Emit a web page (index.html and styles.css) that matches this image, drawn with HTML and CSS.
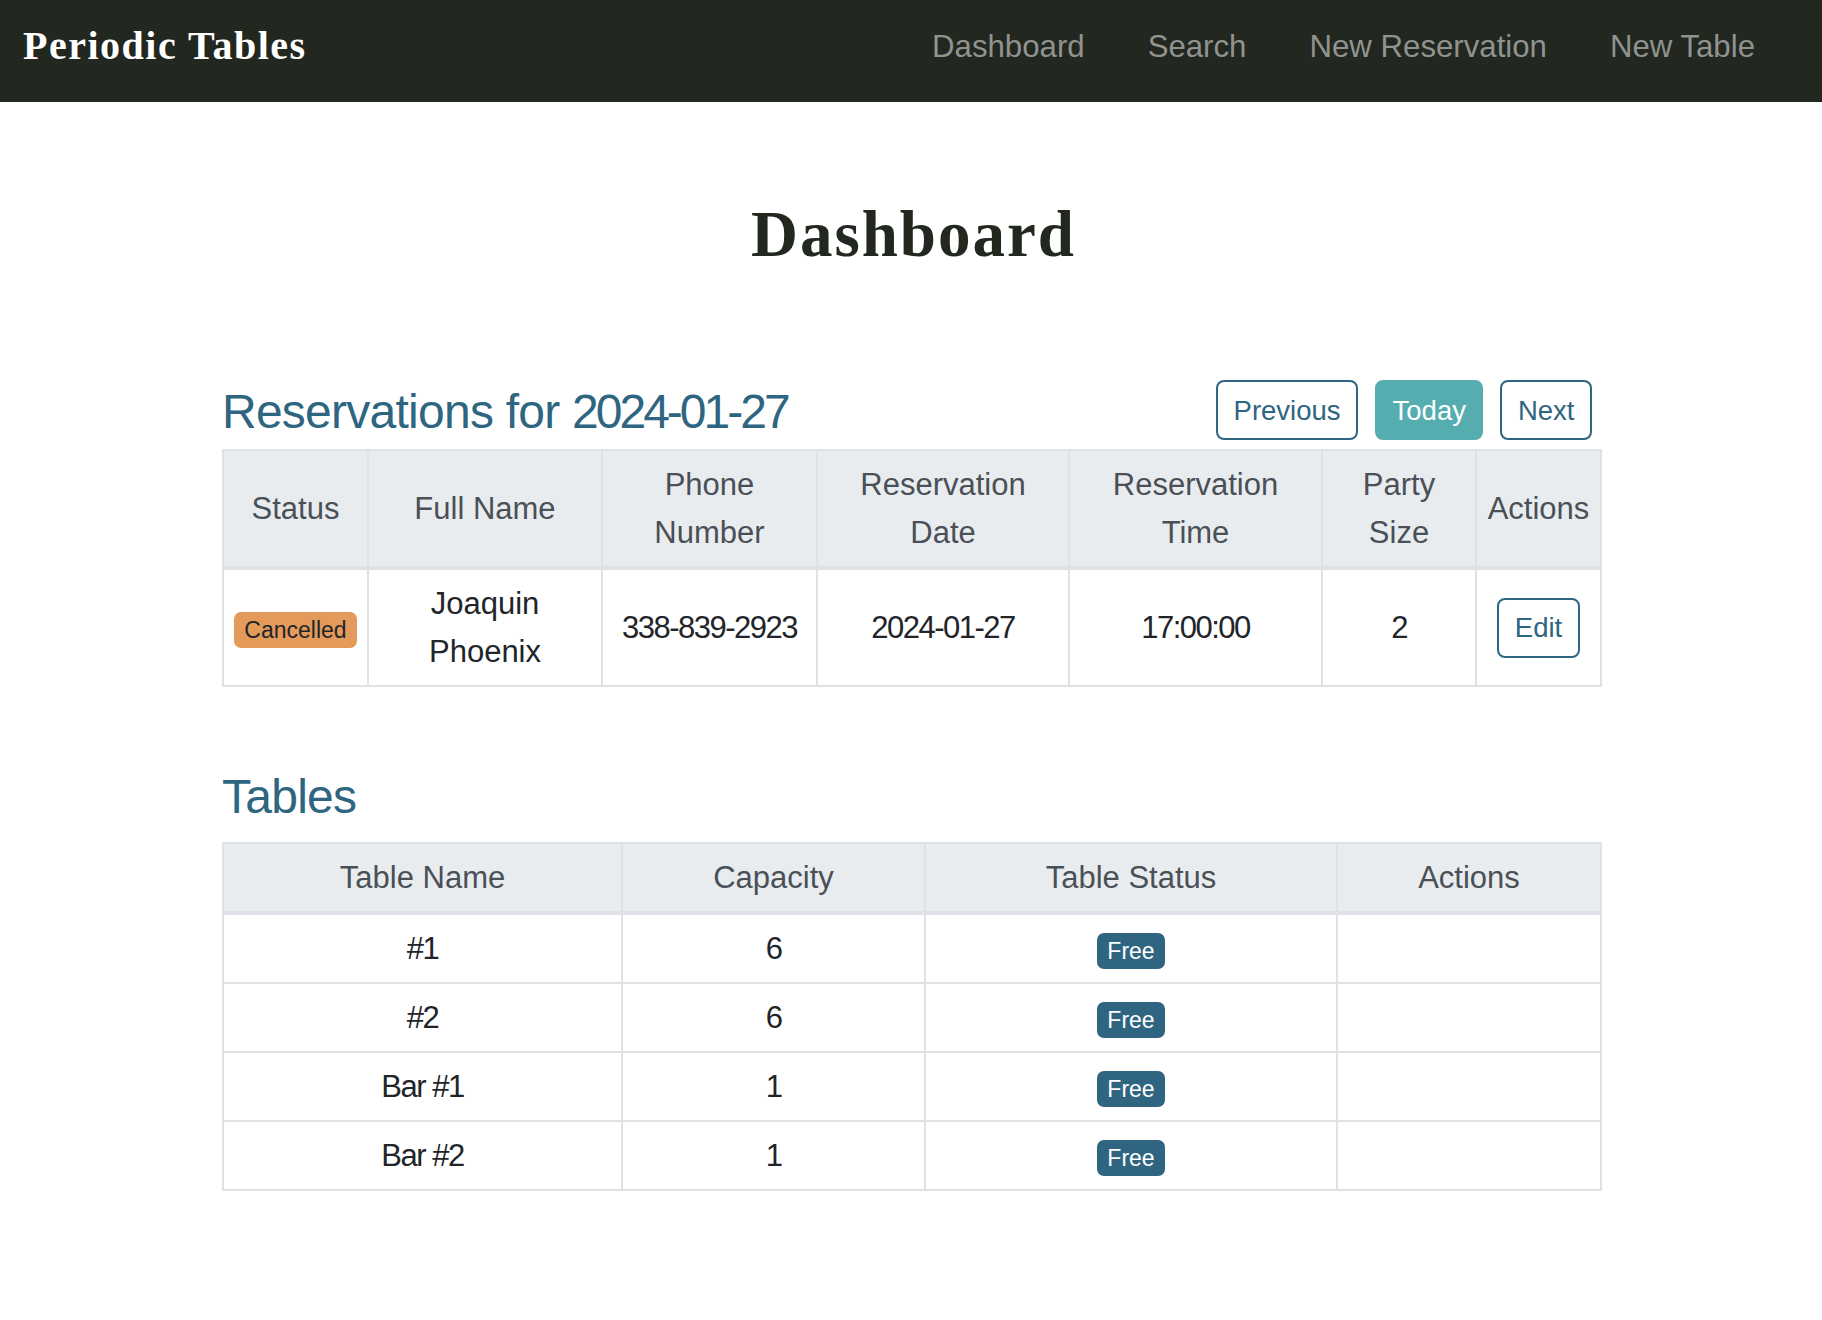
FILE: index.html
```html
<!DOCTYPE html>
<html lang="en">
<head>
<meta charset="utf-8">
<title>Periodic Tables</title>
<link rel="stylesheet" href="styles.css">
</head>
<body>
<nav class="navbar">
  <a class="brand" href="#">Periodic Tables</a>
  <div class="nav-links">
    <a class="nav-link" href="#">Dashboard</a>
    <a class="nav-link" href="#">Search</a>
    <a class="nav-link" href="#">New Reservation</a>
    <a class="nav-link" href="#">New Table</a>
  </div>
</nav>
<main class="container">
  <h1 class="page-title">Dashboard</h1>

  <section class="reservations">
    <div class="section-head">
      <h2 class="section-title">Reservations for <span class="digits">2024-01-27</span></h2>
      <div class="btn-group">
        <button class="btn btn-outline">Previous</button>
        <button class="btn btn-fill">Today</button>
        <button class="btn btn-outline">Next</button>
      </div>
    </div>
    <table class="table res-table">
      <thead>
        <tr>
          <th class="c-status">Status</th>
          <th class="c-name">Full Name</th>
          <th class="c-phone">Phone Number</th>
          <th class="c-date">Reservation Date</th>
          <th class="c-time">Reservation Time</th>
          <th class="c-party">Party Size</th>
          <th class="c-actions">Actions</th>
        </tr>
      </thead>
      <tbody>
        <tr>
          <td><span class="badge badge-cancelled">Cancelled</span></td>
          <td>Joaquin Phoenix</td>
          <td class="num">338-839-2923</td>
          <td class="num">2024-01-27</td>
          <td class="num">17:00:00</td>
          <td class="num">2</td>
          <td><button class="btn btn-outline">Edit</button></td>
        </tr>
      </tbody>
    </table>
  </section>

  <section class="tables-section">
    <h2 class="section-title tables-title">Tables</h2>
    <table class="table tbl-table">
      <thead>
        <tr>
          <th class="t-name">Table Name</th>
          <th class="t-cap">Capacity</th>
          <th class="t-status">Table Status</th>
          <th class="t-actions">Actions</th>
        </tr>
      </thead>
      <tbody>
        <tr><td class="num">#1</td><td class="num">6</td><td><span class="badge badge-free">Free</span></td><td></td></tr>
        <tr><td class="num">#2</td><td class="num">6</td><td><span class="badge badge-free">Free</span></td><td></td></tr>
        <tr><td class="num">Bar #1</td><td class="num">1</td><td><span class="badge badge-free">Free</span></td><td></td></tr>
        <tr><td class="num">Bar #2</td><td class="num">1</td><td><span class="badge badge-free">Free</span></td><td></td></tr>
      </tbody>
    </table>
  </section>
</main>
</body>
</html>
```

FILE: styles.css
```css
* { box-sizing: border-box; }

html, body {
  margin: 0;
  padding: 0;
  background: #ffffff;
}

body {
  font-family: "Liberation Sans", Arial, sans-serif;
  color: #212529;
}

/* ---------- navbar ---------- */
.navbar {
  height: 102px;
  background: #22271f;
  display: flex;
  justify-content: space-between;
  align-items: flex-start;
  padding: 0 67px 0 23px;
}

.brand {
  font-family: "Liberation Serif", "Times New Roman", serif;
  font-weight: 700;
  font-size: 40px;
  line-height: 40px;
  letter-spacing: 1.5px;
  color: #ffffff;
  text-decoration: none;
  margin-top: 25.5px;
}

.nav-links {
  display: flex;
  gap: 63px;
  margin-top: 30.7px;
}

.nav-link {
  font-size: 31.2px;
  line-height: 31.2px;
  color: #90938f;
  text-decoration: none;
}

/* ---------- main ---------- */
.container {
  width: 1378px;
  margin: 0 auto;
}

.page-title {
  font-family: "Liberation Serif", "Times New Roman", serif;
  font-weight: 700;
  font-size: 65px;
  line-height: 78px;
  letter-spacing: 2px;
  color: #22271f;
  text-align: center;
  margin: 93px 0 0;
  padding-left: 5px;
}

.section-head {
  display: flex;
  justify-content: space-between;
  align-items: flex-end;
  margin-top: 107px;
}

.section-title {
  font-weight: 400;
  font-size: 48px;
  line-height: 1.2;
  letter-spacing: -0.75px;
  color: #2e6580;
  margin: 0;
}

.section-title .digits {
  letter-spacing: -3px;
}

.btn-group {
  display: flex;
  gap: 17px;
  margin-right: 8px;
}

.btn {
  font-family: "Liberation Sans", Arial, sans-serif;
  font-size: 27.5px;
  line-height: 1.5;
  padding: 7.6px 15.5px;
  border: 2px solid #2e6580;
  border-radius: 8px;
  background: #ffffff;
  color: #2e6580;
  cursor: pointer;
}

.btn-fill {
  background: #56adaf;
  border-color: #56adaf;
  color: #ffffff;
}

/* ---------- tables ---------- */
.table {
  width: 100%;
  border-collapse: collapse;
  table-layout: fixed;
  font-size: 31px;
  line-height: 48px;
  text-align: center;
}

.res-table {
  margin-top: 9px;
}

.table th,
.table td {
  border: 2px solid #dee2e6;
  padding: 9.5px 9.5px;
  vertical-align: middle;
}

.table th {
  font-weight: 400;
  color: #495057;
  background: #e9ecef;
  border-bottom: 4px solid #dee2e6;
}

.table td {
  color: #212529;
}

.table td.num {
  letter-spacing: -1.5px;
}

.c-status { width: 145px; }
.c-name { width: 234px; }
.c-phone { width: 215px; }
.c-date { width: 252px; }
.c-time { width: 253px; }
.c-party { width: 154px; }
.c-actions { width: 125px; }

.t-name { width: 399px; }
.t-cap { width: 303px; }
.t-status { width: 412px; }
.t-actions { width: 264px; }

.tables-title {
  margin: 80.6px 0 16.8px;
}

.badge {
  display: inline-block;
  font-size: 23px;
  line-height: 1;
  padding: 6.5px 10px;
  border-radius: 7px;
  letter-spacing: 0;
}

.badge-cancelled {
  background: #e49a5b;
  color: #212529;
}

.badge-free {
  background: #2f6580;
  color: #ffffff;
}
```
